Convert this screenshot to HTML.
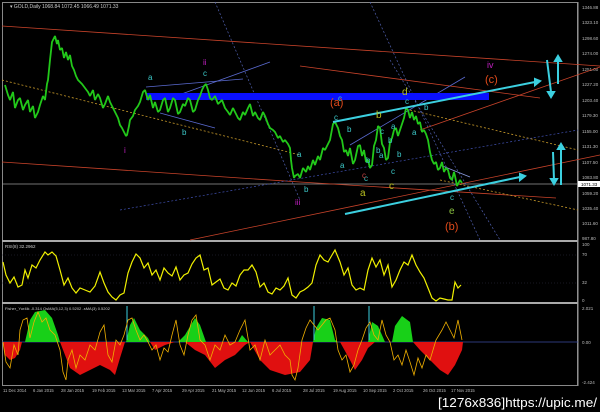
<!DOCTYPE html>
<html><head><meta charset="utf-8"><style>
html,body{margin:0;padding:0;background:#000;width:600px;height:412px;overflow:hidden}
svg{display:block}
text{font-family:"Liberation Sans",sans-serif}
</style></head><body>
<svg width="600" height="412" viewBox="0 0 600 412" xmlns="http://www.w3.org/2000/svg">
<rect width="600" height="412" fill="#000"/>
<rect x="2.5" y="2.5" width="575" height="383" fill="none" stroke="#888" stroke-width="1"/>
<line x1="2" y1="241" x2="578" y2="241" stroke="#aaa" stroke-width="2"/>
<line x1="2" y1="303" x2="578" y2="303" stroke="#aaa" stroke-width="2"/>
<line x1="578" y1="2" x2="578" y2="386" stroke="#999"/>
<text x="10" y="8" font-size="5" fill="#ccc">▾ GOLD,Daily  1068.84 1072.45 1066.49 1071.33</text>
<g font-size="4.5" fill="#bbb">
<text x="582" y="9">1346.88</text><text x="582" y="24">1323.10</text><text x="582" y="40">1298.60</text>
<text x="582" y="55">1274.00</text><text x="582" y="71">1251.00</text><text x="582" y="86">1227.20</text>
<text x="582" y="102">1203.40</text><text x="582" y="117">1179.30</text><text x="582" y="133">1155.00</text>
<text x="582" y="148">1131.30</text><text x="582" y="164">1107.50</text><text x="582" y="179">1083.80</text>
<text x="582" y="195">1059.20</text><text x="582" y="210">1035.40</text><text x="582" y="225">1011.60</text>
<text x="582" y="240">987.80</text>
<text x="582" y="246">100</text><text x="582" y="256">70</text><text x="582" y="284">32</text><text x="582" y="302">0</text>
<text x="582" y="310">2.021</text><text x="582" y="344">0.00</text><text x="582" y="384">-2.424</text>
</g>
<rect x="578" y="181" width="22" height="6" fill="#fff"/><text x="581" y="186" font-size="4.5" fill="#000">1071.33</text>
<line x1="2" y1="184" x2="578" y2="184" stroke="#999" stroke-width="0.7"/>
<line x1="2" y1="26" x2="600" y2="66" stroke="#c8432a" stroke-width="0.8"/>
<line x1="2" y1="162" x2="300" y2="182" stroke="#c8432a" stroke-width="0.8"/>
<line x1="300" y1="182" x2="556" y2="198" stroke="#c8432a" stroke-width="0.8"/>
<line x1="300" y1="66" x2="540" y2="98" stroke="#c8432a" stroke-width="0.8"/>
<line x1="190" y1="240" x2="600" y2="155" stroke="#c8432a" stroke-width="0.8"/>
<line x1="420" y1="130" x2="600" y2="67" stroke="#c8432a" stroke-width="0.8"/>
<line x1="2" y1="80" x2="300" y2="155" stroke="#c89a2a" stroke-width="0.8" stroke-dasharray="2,2"/>
<line x1="410" y1="110" x2="578" y2="150" stroke="#c89a2a" stroke-width="0.8" stroke-dasharray="2,2"/>
<line x1="440" y1="180" x2="578" y2="210" stroke="#c89a2a" stroke-width="0.8" stroke-dasharray="2,2"/>
<line x1="120" y1="210" x2="578" y2="130" stroke="#4050b0" stroke-width="0.7" stroke-dasharray="2,2"/>
<line x1="215" y1="2" x2="300" y2="200" stroke="#5060b0" stroke-width="0.7" stroke-dasharray="2,2"/>
<line x1="370" y1="2" x2="480" y2="240" stroke="#5060b0" stroke-width="0.7" stroke-dasharray="2,2"/>
<line x1="390" y1="60" x2="500" y2="240" stroke="#5060b0" stroke-width="0.7" stroke-dasharray="2,2"/>
<line x1="146" y1="87" x2="243" y2="79" stroke="#5a6ad0" stroke-width="0.8"/>
<line x1="165" y1="100" x2="270" y2="62" stroke="#5a6ad0" stroke-width="0.8"/>
<line x1="160" y1="113" x2="215" y2="128" stroke="#5a6ad0" stroke-width="0.8"/>
<line x1="350" y1="145" x2="465" y2="77" stroke="#5a6ad0" stroke-width="0.8"/>
<line x1="440" y1="165" x2="470" y2="177" stroke="#8a9ae0" stroke-width="0.8"/>
<rect x="146" y="93" width="343" height="7" fill="#0a10ff"/>
<polyline fill="none" stroke="#22c81a" stroke-width="1.8" stroke-linejoin="bevel" points="5,85 8,95 10,100 13,92 15,108 18,100 20,98 23,110 25,105 28,100 30,112 33,106 35,118 38,112 40,105 43,96 45,100 47,84 48,80 50,60 52,42 54,38 55,36 57,44 58,40 60,50 62,48 64,58 66,52 68,60 70,55 72,66 74,70 76,76 78,80 82,84 85,88 88,92 90,96 93,90 95,100 98,94 100,98 103,108 105,104 108,96 110,102 113,108 115,112 118,118 120,125 122,128 124,132 126,136 127,135 129,126 130,120 133,116 135,110 138,106 140,102 143,92 145,90 148,100 150,95 153,108 155,102 158,112 160,110 163,100 165,98 168,112 170,108 173,98 175,100 178,114 180,112 183,104 185,106 188,98 190,100 193,112 195,110 198,100 200,96 202,90 204,86 206,84 208,90 210,98 212,100 215,96 218,104 222,100 225,108 228,112 230,115 233,108 235,112 238,118 240,120 243,112 245,115 248,108 250,104 253,116 255,112 258,118 260,120 263,112 265,116 268,124 270,128 273,130 275,132 278,138 280,136 283,142 285,140 288,144 290,148 291,160 292,168 294,178 295,176 298,174 300,178 303,168 306,172 308,166 310,170 313,160 315,165 318,156 320,160 323,148 325,150 328,144 330,140 333,124 335,122 338,128 340,136 342,140 344,152 346,150 348,156 350,148 353,164 355,160 358,146 360,145 362,156 364,150 366,162 368,160 370,168 372,165 374,146 376,140 378,126 380,128 382,144 384,148 386,160 388,158 390,142 392,138 394,130 396,128 398,136 400,130 402,124 404,118 406,108 408,110 410,118 412,112 414,120 416,116 418,124 420,122 422,132 424,130 426,134 428,140 430,152 432,160 434,164 436,162 438,170 440,168 442,162 444,172 446,168 448,170 450,178 452,180 454,172 455,176 457,186 458,184 460,180 462,183"/>
<g stroke="#3cd0e0" stroke-width="2" fill="#3cd0e0">
<line x1="333" y1="122" x2="535" y2="82"/><polygon points="535,79 540,81 535,85"/>
<line x1="345" y1="214" x2="520" y2="177"/><polygon points="520,174 525,176 520,180"/>
<line x1="547" y1="60" x2="551" y2="92"/><polygon points="548,92 554,92 551,97"/>
<line x1="558" y1="84" x2="558" y2="60"/><polygon points="555,61 561,61 558,56"/>
<line x1="553" y1="152" x2="554" y2="180"/><polygon points="551,179 557,179 554,184"/>
<line x1="561" y1="185" x2="561" y2="148"/><polygon points="558,149 564,149 561,144"/>
</g>
<g font-size="8">
<text x="148" y="80" fill="#3cc8c8">a</text><text x="203" y="76" fill="#3cc8c8">c</text>
<text x="203" y="65" fill="#c020c0">ii</text><text x="182" y="135" fill="#3cc8c8">b</text>
<text x="124" y="153" fill="#c020c0">i</text><text x="295" y="205" fill="#c020c0">iii</text>
<text x="297" y="157" fill="#3cc8c8">a</text><text x="304" y="192" fill="#3cc8c8">b</text>
<text x="334" y="120" fill="#3cc8c8">c</text><text x="347" y="132" fill="#3cc8c8">b</text>
<text x="340" y="168" fill="#3cc8c8">a</text><text x="380" y="134" fill="#3cc8c8">c</text>
<text x="376" y="153" fill="#3cc8c8">b</text><text x="391" y="129" fill="#3cc8c8">a</text>
<text x="388" y="143" fill="#3cc8c8">b</text><text x="397" y="157" fill="#3cc8c8">b</text>
<text x="366" y="163" fill="#3cc8c8">b</text><text x="379" y="158" fill="#3cc8c8">a</text>
<text x="338" y="101" fill="#3cc8c8">c</text><text x="405" y="104" fill="#3cc8c8">c</text>
<text x="424" y="110" fill="#3cc8c8">b</text><text x="412" y="135" fill="#3cc8c8">a</text>
<text x="364" y="181" fill="#3cc8c8">c</text><text x="391" y="174" fill="#3cc8c8">c</text>
<text x="362" y="178" fill="#c04040">c</text><text x="450" y="200" fill="#3cc8c8">c</text>
<text x="376" y="118" font-size="10" fill="#b8c020">b</text>
<text x="402" y="95" font-size="10" fill="#b8c020">d</text>
<text x="360" y="196" font-size="10" fill="#b8c020">a</text>
<text x="389" y="189" font-size="10" fill="#b8c020">c</text>
<text x="449" y="214" font-size="10" fill="#8ac040">e</text>
<text x="330" y="106" font-size="11" fill="#e04a1a">(a)</text>
<text x="485" y="83" font-size="11" fill="#e04a1a">(c)</text>
<text x="445" y="230" font-size="11" fill="#e04a1a">(b)</text>
<text x="487" y="68" font-size="9" fill="#c020c0">iv</text>
</g>
<text x="5" y="248" font-size="4.5" fill="#ccc">RSI(8) 32.2962</text>
<line x1="2" y1="283" x2="578" y2="283" stroke="#334" stroke-width="0.5" stroke-dasharray="1,2"/>
<line x1="2" y1="255" x2="578" y2="255" stroke="#334" stroke-width="0.5" stroke-dasharray="1,2"/>
<polyline fill="none" stroke="#f0f000" stroke-width="1.2" points="3,262 6,275 10,283 14,277 18,287 22,285 25,270 28,278 32,265 36,268 40,260 45,252 48,255 52,252 56,256 60,270 64,285 68,278 72,288 76,293 80,288 85,290 90,292 95,286 100,272 104,283 108,292 112,297 116,300 120,295 124,293 128,273 132,262 136,254 140,258 144,268 148,263 152,275 156,270 160,280 164,268 168,273 172,276 176,267 180,280 184,275 188,273 192,264 196,258 200,255 204,270 208,268 212,285 216,282 220,279 224,288 228,290 232,283 236,286 240,275 244,270 248,270 252,265 256,272 260,287 264,283 268,292 272,294 276,288 280,290 284,286 288,278 292,295 296,298 300,292 304,290 308,287 312,283 316,265 320,255 324,260 328,262 332,255 335,250 340,262 344,275 348,268 352,285 356,290 360,288 364,290 368,270 372,258 376,267 380,260 384,275 388,265 392,287 396,280 400,270 404,262 408,265 412,255 416,265 420,272 424,278 428,288 432,298 436,301 440,298 444,299 448,300 452,300 455,282 458,288 461,285"/>
<text x="5" y="310" font-size="4" fill="#ccc">Fisher_Yur4ik -0.314  OsMA(5,12,3) 0.5202  -sMA(3) 0.5202</text>
<line x1="2" y1="342" x2="578" y2="342" stroke="#3a4aa0" stroke-width="0.8"/>
<g fill="#e01010">
<polygon points="3,342 5,355 10,360 15,358 20,350 22,342"/>
<polygon points="60,342 65,355 70,368 80,375 90,370 100,365 110,370 115,375 120,358 125,342"/>
<polygon points="150,342 155,350 165,345 175,342"/>
<polygon points="185,342 195,350 205,355 215,368 225,360 235,355 245,345 250,342"/>
<polygon points="250,342 260,360 270,370 285,375 300,372 310,360 313,342"/>
<polygon points="340,342 350,360 355,370 362,360 368,348 375,342"/>
<polygon points="413,342 420,350 430,360 440,370 448,375 455,365 462,350 463,342"/>
</g>
<g fill="#18d018">
<polygon points="25,342 30,320 35,312 45,310 52,318 58,335 60,342"/>
<polygon points="126,342 130,325 134,318 140,330 148,338 150,342"/>
<polygon points="178,342 185,335 195,318 200,325 206,342"/>
<polygon points="238,342 242,335 248,342"/>
<polygon points="313,342 316,328 322,318 330,320 335,340 338,342"/>
<polygon points="368,342 372,322 378,326 385,342"/>
<polygon points="392,342 395,326 402,316 410,322 413,342"/>
</g>
<g stroke="#3cd0e0" stroke-width="1"><line x1="127" y1="306" x2="127" y2="340"/><line x1="314" y1="306" x2="314" y2="340"/><line x1="369" y1="306" x2="369" y2="340"/></g>
<polyline fill="none" stroke="#f0b000" stroke-width="0.8" points="3,342 6,362 10,368 14,345 18,355 20,330 23,320 27,318 30,338 34,322 38,312 42,322 46,318 50,330 55,335 60,350 63,372 66,380 68,360 72,350 76,368 80,355 85,360 90,345 95,350 100,332 104,325 108,355 112,362 116,340 120,345 124,335 128,320 132,318 136,330 140,340 144,335 148,342 152,350 156,345 160,360 164,348 168,352 172,335 176,320 180,345 184,355 188,335 192,320 196,315 200,340 205,345 210,360 215,345 220,350 225,335 230,345 235,342 240,330 245,320 250,350 255,345 260,360 265,340 270,355 275,350 280,345 285,355 290,360 292,375 295,380 298,368 302,340 306,328 310,320 314,325 318,330 322,325 326,320 330,318 335,330 338,350 342,360 346,355 350,372 354,365 358,350 362,340 366,328 370,322 374,335 378,340 382,320 386,335 390,342 394,360 398,355 402,365 406,350 410,362 414,375 418,358 422,368 426,355 430,360 436,340 442,330 446,322 450,330 454,338 458,320 462,340"/>
<g font-size="4.2" fill="#bbb">
<text x="3" y="392">11 Dec 2014</text><text x="33" y="392">6 Jan 2015</text><text x="61" y="392">28 Jan 2015</text>
<text x="92" y="392">19 Feb 2015</text><text x="122" y="392">13 Mar 2015</text><text x="152" y="392">7 Apr 2015</text>
<text x="182" y="392">29 Apr 2015</text><text x="212" y="392">21 May 2015</text><text x="242" y="392">12 Jun 2015</text>
<text x="272" y="392">6 Jul 2015</text><text x="303" y="392">28 Jul 2015</text><text x="333" y="392">19 Aug 2015</text>
<text x="363" y="392">10 Sep 2015</text><text x="393" y="392">2 Oct 2015</text><text x="423" y="392">26 Oct 2015</text>
<text x="451" y="392">17 Nov 2015</text>
</g>
<text x="438" y="407" font-size="13" fill="#fff" textLength="159" lengthAdjust="spacingAndGlyphs" font-family="Liberation Sans Narrow,Liberation Sans,sans-serif">[1276x836]https://upic.me/</text>
</svg>
</body></html>
